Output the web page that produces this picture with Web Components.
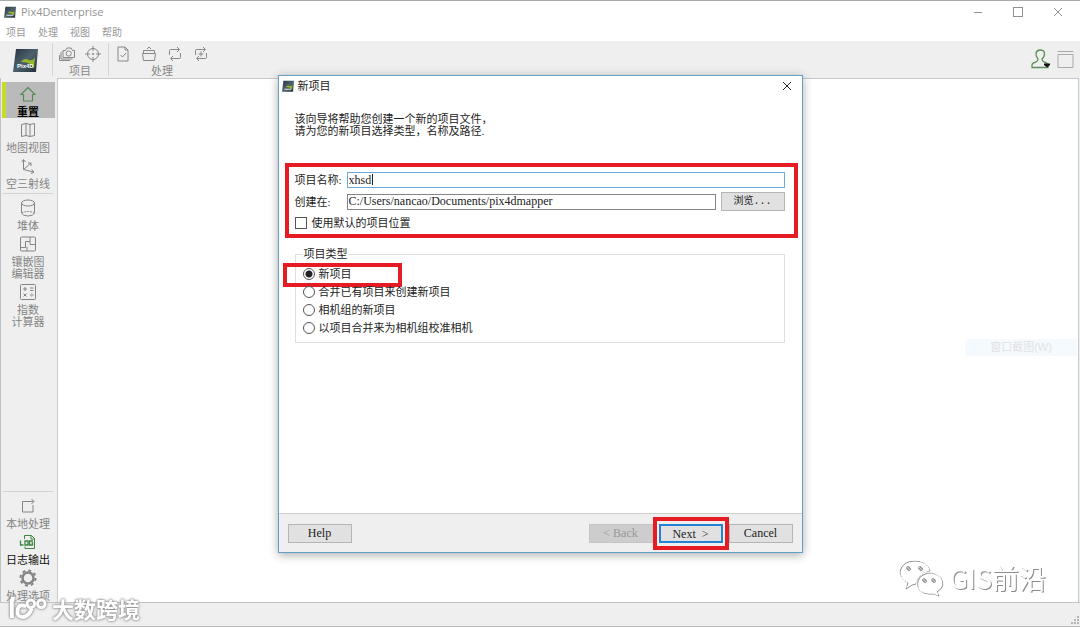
<!DOCTYPE html>
<html lang="zh-CN">
<head>
<meta charset="utf-8">
<title>Pix4Denterprise</title>
<style>
  html, body { margin: 0; height: 100%; }
  body { font: 11px/12px "Liberation Serif", "Noto Sans CJK SC", sans-serif; color: #222; background: #fff; }
</style>
</head>
<body>
<app-window></app-window>
<script>
const define = (name, html) => customElements.define(name, class extends HTMLElement {
  connectedCallback() {
    if (this.shadowRoot) return;
    const t = document.createElement('template');
    t.innerHTML = typeof html === 'function' ? html(this) : html;
    this.attachShadow({ mode: 'open' }).append(t.content.cloneNode(true));
  }
});

const logo = `<defs><linearGradient id="g" x1="0" y1="0" x2="1" y2="1"><stop offset="0" stop-color="#27343f"/><stop offset=".5" stop-color="#4d626d"/><stop offset="1" stop-color="#202d38"/></linearGradient></defs>
<path d="M3 1H25L23 24H0Z" fill="url(#g)" stroke="none"/><path d="M8 14Q11 9 16 12Q20 13 22 9L21 20Q16 13 8 14Z" fill="#96b52c" stroke="none"/>`;
const loop = '<path d="M1.500 9V4.500Q1.500 3.500 2.500 3.500H11 M12.500 7V11.500Q12.500 12.500 11.500 12.500H3 M9 1L11.500 3.500L9 6 M5 10L2.500 12.500L5 15"/>';
const icons = {
  logo: [25, 24, logo + '<text x="4" y="20" font-family="Liberation Sans" font-weight="700" font-size="6" fill="#fff" stroke="none">Pix4D</text>'],
  logoSmall: [25, 24, logo + '<path d="M5 19H19" stroke="#b5c4c8" stroke-width="3"/>'],
  camera: [16, 16, '<path d="M4 4.500H6.500L8 2H12L13.500 4.500H15.500V11.500H4Z"/><circle cx="9.700" cy="7.500" r="2.600"/><path d="M3 5.500L2 6.500V13H13.500M1.500 8.500L.5 9.500V14.500H11"/>'],
  target: [16, 16, '<circle cx="8" cy="8" r="5.500"/><path d="M8 0V5M8 11V16M0 8H5M11 8H16"/><circle cx="8" cy="8" r=".7"/>'],
  check: [12, 16, '<path d="M1 1H8L11 4V15H1Z M8 1V4H11 M3.500 9L5.500 11L9 7"/>'],
  box: [16, 16, '<path d="M1.500 7.500H14.500L13.500 14.500H2.500Z M2.500 7V4.500H13.500V7 M6 3L8 1L10 3"/>'],
  loop: [14, 16, loop],
  loopPlus: [14, 16, loop + '<path d="M7 5.500V10.500M4.500 8H9.500"/>'],
  user: [20, 20, '<path d="M7 10Q4.500 7 5 4Q6 1 9 1Q13 1 13.500 4Q14 7 11 10Q11 12 13 13Q17 14 17 17V18.500H1V16Q1 14 5 13Q7 12 7 10Z" stroke="#5d9058" stroke-width="1.300"/><path d="M13 14.500H19V16L16 18.500L13 16Z" fill="#111" stroke="none"/>'],
  panel: [17, 18, '<path d="M.5 1.500H16.500M1 4.500H16V17.500H1Z"/>'],
  home: [18, 18, '<path d="M2 9.500L9 2.500L16 9.500H13.500V16H4.500V9.500Z" stroke="#548a55" stroke-width="1.200"/>'],
  map: [18, 18, '<path d="M2.500 3.500L7 2.500L11 3.500L15.500 2.500V14.500L11 15.500L7 14.500L2.500 15.500Z M7 2.500V14.500M11 3.500V15.500"/>'],
  rays: [18, 18, '<path d="M4.500 3V12.500L14.500 15 M2.500 5L4.500 2.500L6.500 5 M12.500 12.500L15 15L12 16.500 M4.500 12.500L12 6 M9 6H12V9"/>'],
  cylinder: [18, 18, '<ellipse cx="9" cy="4" rx="6.500" ry="3"/><path d="M2.500 4V14Q4 17 9 17T15.500 14V4"/><path d="M2.500 14Q9 11 15.500 14" stroke-dasharray="2 1"/>'],
  mosaic: [18, 18, '<rect x="1.500" y="2" width="15" height="14" rx="1"/><path d="M11 2V9.500H16.500 M1.500 12.500H6.500V6.500H11 M8 16V11.500"/>'],
  calc: [18, 18, '<rect x="1.500" y="1.500" width="15" height="15" rx="1"/><path d="M6 4V8M4 6H8 M11 5H14.500M11 7.500H14.500 M4.500 10.500L7.500 13.500M7.500 10.500L4.500 13.500 M11 12H14.500M12.700 10V10.500M12.700 13.500V14"/>'],
  exportBox: [18, 18, '<path d="M9 4.500H3.500V15H14V8 M8 4.500H14.500M12.500 2L15 4.500L12.500 7"/>'],
  log: [18, 18, '<path d="M5.500 6V2.500H12.500L15.500 5.500V15.500H6V13.500 M12 2.500V6H15.500" stroke="#3d8540"/><path d="M1.500 7.500V12H4.500 M6 8H9V12H6Z M14 8H10.500V12H13.500V10H12.500" stroke="#3d8540" stroke-width="1.300"/>'],
  gear: [18, 18, '<circle cx="9" cy="9" r="5.500" stroke-width="2.500"/><circle cx="9" cy="9" r="7.600" stroke-width="2" stroke-dasharray="3 2.970"/>'],
  min: [10, 10, '<path d="M1 5.500H9"/>'],
  max: [10, 10, '<rect x=".5" y=".5" width="9" height="9"/>'],
  close: [10, 10, '<path d="M1 1L9 9M9 1L1 9"/>'],
  resize: [10, 10, '<path d="M7 1H9M4 4H6M7 4H9M1 7H3M4 7H6M7 7H9" stroke-width="2" stroke="#b5b5b5"/>'],
  wechat: [46, 40, '<path d="M8 30L10 24Q1 19 2 12Q5 2 17 2Q29 2 32 12Q20 14 18 25L14 26Z"/><path d="M41 37L36 35Q24 36 20 29Q18 20 25 16Q34 11 42 18Q49 27 39 33Z"/><g stroke="#999"><circle cx="11" cy="10" r="1.500"/><circle cx="23" cy="10" r="1.500"/><circle cx="27" cy="22" r="1.500"/><circle cx="36" cy="22" r="1.500"/></g>'],
  brand: [40, 26, '<path d="M3 3V23M18 11Q10 7 9 15Q8 22 15 22Q21 21 24 13M6 3H2" stroke-width="4"/><circle cx="23" cy="8" r="4" stroke-width="3"/><circle cx="34" cy="8" r="4" stroke-width="3"/>']
};
define('ui-icon', el => {
  const [w, h, body] = icons[el.getAttribute('name')];
  const s = el.hasAttribute('width') ? +el.getAttribute('width') : w;
  return `<style>:host{display:block;flex:none}svg{display:block;overflow:visible;fill:none;stroke:currentColor}</style>
  <svg width="${s}" height="${Math.round(h * s / w)}" viewBox="0 0 ${w} ${h}" aria-hidden="true">${body}</svg>`;
});

define('icon-button', el => `<style>
  :host{display:flex}
  button{display:flex;align-items:center;justify-content:center;width:var(--w,26px);height:var(--h,24px);padding:0;border:0;background:none;color:inherit}
</style><button type="button" aria-label="${el.getAttribute('label')}"><ui-icon name="${el.getAttribute('name')}"></ui-icon></button>`);

define('title-bar', `<style>
  :host{display:flex;align-items:center;height:23px;box-sizing:border-box;padding:0 2px 2px 4px;background:#fff;color:#929292;font:11px/16px "Open Sans","Noto Sans CJK SC",sans-serif}
  span{flex:1;margin-left:5px}
  icon-button{--w:40px;--h:20px}
</style>
<ui-icon name="logoSmall" width="12"></ui-icon><span><slot></slot></span>
<icon-button name="min" label="最小化"></icon-button><icon-button name="max" label="最大化"></icon-button><icon-button name="close" label="关闭"></icon-button>`);

define('menu-bar', `<style>
  :host{display:block}
  nav{display:flex;align-items:flex-start;gap:12px;height:17px;padding-left:6px;background:#fff}
  button{padding:0;border:0;background:none;color:#999;font:10px/15px "Noto Sans CJK SC",sans-serif}
</style><nav><button>项目</button><button>处理</button><button>视图</button><button>帮助</button></nav>`);

define('tool-group', `<style>
  :host{display:flex;flex-direction:column;align-items:center;padding:0 2px 0 1px;border-left:1px solid #d5d5d5;color:#888;margin:2px 0}
  div{display:flex}
</style><div><slot></slot></div><span><slot name="label"></slot></span>`);

define('tool-bar', `<style>
  :host{display:flex;height:37px;background:#efefef}
  .logo{width:52px;display:flex;align-items:center;justify-content:center;box-sizing:border-box;padding-right:2px}
  .end{margin-left:auto;display:flex;align-items:center;gap:6px;padding:0 6px 2px 0;color:#aaa}
  icon-button{--h:22px}
  .end icon-button{--w:20px}
  .end icon-button + icon-button{--w:17px}
</style>
<div class="logo"><ui-icon name="logo"></ui-icon></div>
<tool-group><icon-button name="camera" label="相机"></icon-button><icon-button name="target" label="控制点"></icon-button><span slot="label">项目</span></tool-group>
<tool-group><icon-button name="check" label="质量报告"></icon-button><icon-button name="box" label="打开"></icon-button><icon-button name="loop" label="重新优化"></icon-button><icon-button name="loopPlus" label="重新匹配"></icon-button><span slot="label">处理</span></tool-group>
<div class="end"><icon-button name="user" label="用户"></icon-button><icon-button name="panel" label="面板"></icon-button></div>`);

define('side-item', el => `<style>
  :host{display:block}
  button{display:flex;flex-direction:column;align-items:center;gap:3px;width:100%;padding:3px 1px 0 0;border:0;background:none;color:#858585;font:inherit;text-align:center}
  :host([active]) button{background:linear-gradient(90deg,#c8da28 4px,#bababa 4px);color:#000;font-weight:700}
  :host([enabled]) button{color:#111}
</style><button type="button"><ui-icon name="${el.getAttribute('icon')}"></ui-icon><span><slot></slot></span></button>`);

define('side-bar', `<style>
  :host{display:flex;flex-direction:column;width:55px;box-sizing:border-box;padding-top:4px;padding-left:1px;background:#efefef;border-left:1px solid #bcc3c6}
  hr{width:50px;margin:3px 0 2px 1px;border:0;border-top:1px solid #d2d2d2}
  .end{margin-top:auto}
</style>
<side-item icon="home" active>重置</side-item><side-item icon="map">地图视图</side-item><side-item icon="rays">空三射线</side-item><hr>
<side-item icon="cylinder">堆体</side-item><side-item icon="mosaic">镶嵌图<br>编辑器</side-item><side-item icon="calc">指数<br>计算器</side-item>
<div class="end"><hr><side-item icon="exportBox">本地处理</side-item><side-item icon="log" enabled>日志输出</side-item><side-item icon="gear">处理选项</side-item></div>`);

define('callout-box', `<style>
  :host{position:absolute;border:4px solid #e51c23;pointer-events:none}
</style>`);

define('push-button', el => `<style>
  :host{display:block}
  button{width:64px;height:19px;padding:0;border:1px solid #b5b5b5;background:#e1e1e1;color:#222;font:inherit;line-height:16px}
  button:disabled{background:#cdcdcd;border-color:#c4c4c4;color:#999}
  :host([default]) button{border:2px solid #2581d4}
</style><button type="button" ${el.hasAttribute('disabled') ? 'disabled' : ''}><slot></slot></button>`);

define('text-row', el => `<style>
  :host{display:flex;align-items:center}
  label{width:52px;flex:none}
  input{flex:1;min-width:0;box-sizing:border-box;height:16px;padding:0 1px;border:1px solid #858585;border-radius:0;background:#fff;color:#222;font:12px/14px "Liberation Serif",serif;outline:0}
  :host([current]) input{border-color:#65a9df;background:linear-gradient(#222,#222) 24px 1px/1px 11px no-repeat #fff}
  ::slotted(*){margin-left:5px}
</style><label for="f">${el.getAttribute('label')}</label><input id="f" type="text" value="${el.getAttribute('value')}" spellcheck="false"><slot></slot>`);

define('type-options', `<style>
  :host{display:block}
  fieldset{margin:0;padding:5px 7px;border:1px solid #e0e0e0;min-width:0}
  legend{padding:0 1px}
  label{position:relative;display:flex;align-items:center;gap:4px;height:18px;width:max-content}
  input{appearance:none;box-sizing:border-box;width:12px;height:12px;margin:0;border:1px solid #555;border-radius:50%;background:#fff}
  input:checked{background:radial-gradient(#222 3px,#fff 4px)}
  callout-box{left:-20px;top:-2px;width:111px;height:16px}
</style>
<fieldset><legend>项目类型</legend>
<label><input type="radio" name="type" checked>新项目<callout-box></callout-box></label>
<label><input type="radio" name="type">合并已有项目来创建新项目</label>
<label><input type="radio" name="type">相机组的新项目</label>
<label><input type="radio" name="type">以项目合并来为相机组校准相机</label>
</fieldset>`);

define('project-wizard', `<style>
  :host{display:flex;flex-direction:column;box-sizing:border-box;width:525px;max-width:100%;min-height:478px;background:#fff;border:1px solid #65a0c9;box-shadow:0 2px 9px #0005}
  header{display:flex;align-items:center;height:20px;padding:0 5px 2px 3px}
  h1{flex:1;margin:0 0 0 4px;font:inherit}
  header icon-button{--w:20px;--h:20px}
  main{flex:1;padding:15px 17px 0 16px}
  p{margin:0 0 35px}
  form{position:relative;display:flex;flex-direction:column;gap:4px;margin:0 0 18px}
  form callout-box{inset:-9px -13px -8px -10px}
  .browse{font:10px/16px "Liberation Mono","Noto Sans CJK SC",monospace}
  .tick{display:flex;align-items:center;gap:5px;height:15px}
  .tick input{appearance:none;box-sizing:border-box;width:12px;height:12px;margin:0;border:1px solid #555;background:#fff}
  footer{display:flex;align-items:center;gap:6px;height:38px;padding:0 9px;background:#efefef;border-top:1px solid #cfcfcf;font-size:12px}
  footer push-button:first-child{margin-right:auto}
  .next{position:relative}
  .next callout-box{inset:-7px -6px}
</style>
<header><ui-icon name="logoSmall" width="12"></ui-icon><h1>新项目</h1><icon-button name="close" label="关闭"></icon-button></header>
<main>
<p>该向导将帮助您创建一个新的项目文件，<br>请为您的新项目选择类型，名称及路径.</p>
<form>
<text-row label="项目名称:" value="xhsd" current></text-row>
<text-row label="创建在:" value="C:/Users/nancao/Documents/pix4dmapper"><push-button class="browse">浏览...</push-button></text-row>
<label class="tick"><input type="checkbox">使用默认的项目位置</label>
<callout-box></callout-box>
</form>
<type-options></type-options>
</main>
<footer><push-button>Help</push-button><push-button disabled>&lt; Back</push-button><div class="next"><push-button default>Next &nbsp;&gt;</push-button><callout-box></callout-box></div><push-button>Cancel</push-button></footer>`);

define('app-window', `<style>
  :host{position:relative;display:flex;flex-direction:column;box-sizing:border-box;min-height:100vh;border-top:1px solid #a9a9a5}
  .body{display:flex;flex:1;background:#efefef}
  .canvas{flex:1;margin:0 1px 0 2px;background:#fff;border:1px solid #c5c8cd;border-bottom:0}
  .status{display:flex;align-items:flex-end;justify-content:flex-end;height:23px;background:#efefef;border-top:1px solid #c4c4c4;border-bottom:1px solid #bbb}
  .overlay{position:absolute;inset:0;display:grid;place-items:center}
  .ghost{position:absolute;right:3px;top:338px;width:112px;height:17px;background:#f5faff;color:#e2e2e2;text-align:center;font:11px/17px "Liberation Sans","Noto Sans CJK SC",sans-serif}
  .mark{position:absolute;display:flex;align-items:center;color:#fff}
  .wechat{right:34px;bottom:29px;gap:6px;font:27px/40px "Noto Sans CJK SC",sans-serif;filter:drop-shadow(1px 1px 0 #8b8b8b)}
  .brand{left:9px;bottom:5px;gap:5px;font:700 22px/28px "Noto Sans CJK SC",sans-serif;filter:drop-shadow(0 0 1px #8b8b8b) drop-shadow(0 0 1px #aaa)}
</style>
<title-bar>Pix4Denterprise</title-bar><menu-bar></menu-bar><tool-bar></tool-bar>
<div class="body"><side-bar></side-bar><div class="canvas"></div></div>
<div class="status"><ui-icon name="resize"></ui-icon></div>
<div class="ghost">窗口截图(W)</div>
<div class="mark wechat"><ui-icon name="wechat"></ui-icon><span>GIS前沿</span></div>
<div class="mark brand"><ui-icon name="brand" width="38"></ui-icon><span>大数跨境</span></div>
<div class="overlay"><project-wizard></project-wizard></div>`);
</script>
</body>
</html>
